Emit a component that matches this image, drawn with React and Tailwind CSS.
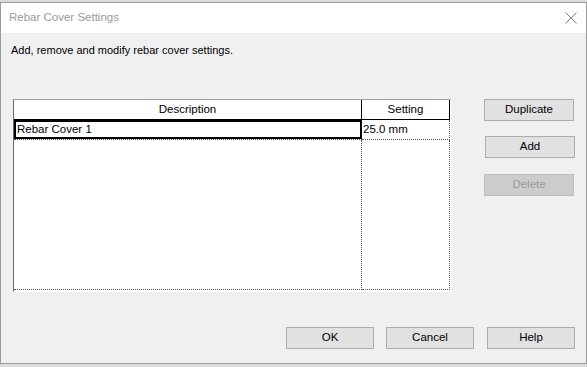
export default function App() {
  const font = "font-['Liberation_Sans',Arial,sans-serif]";
  const btn =
    "h-[22px] w-[88px] border border-[#adadad] bg-[#e1e1e1] flex items-center justify-center text-[11.5px] text-black";
  return (
    <div className={`w-[587px] h-[367px] bg-[#dcdcdc] pt-[2px] ${font}`}>
      <div className="w-[587px] h-[362px] border border-[#9b9b9b] bg-[#f0f0f0] flex flex-col">
        {/* Title bar */}
        <div className="h-[30px] bg-white flex items-center justify-between pl-[8px] pr-[8px]">
          <span className="text-[11.5px] text-[#9a9a9a] leading-none">Rebar Cover Settings</span>
          <svg width="12" height="12" viewBox="0 0 12 12" className="mr-[1px]">
            <path d="M0.5 0.5 L11.5 11.5 M11.5 0.5 L0.5 11.5" stroke="#7a7a7a" strokeWidth="1" fill="none" />
          </svg>
        </div>
        {/* Body */}
        <div className="flex flex-col pt-[9px]">
          <div className="pl-[10px] h-[16px] leading-[16px] text-[11px] text-black">
            Add, remove and modify rebar cover settings.
          </div>
          <div className="flex mt-[41px] pl-[12px]">
            {/* Table */}
            <div className="w-[438px] h-[193px] border-t border-l border-t-[#a0a0a0] border-l-[#6b6b6b] border-r border-b border-r-white border-b-white bg-white flex flex-col text-[11.5px] text-black">
              <div className="flex h-[20px] border-b border-black">
                <div className="w-[348px] border-r border-black flex items-center justify-center leading-none">
                  Description
                </div>
                <div className="w-[88px] border-r border-black flex items-center justify-center leading-none">
                  Setting
                </div>
              </div>
              <div className="flex h-[20px]">
                <div className="w-[348px] border-b border-dotted border-[#555] flex">
                  <div className="w-[348px] h-[19px] border-2 border-black flex items-center pl-[1px] leading-none">
                    Rebar Cover 1
                  </div>
                </div>
                <div className="w-[88px] border-r border-b border-dotted border-[#555] flex items-center pl-[1px] leading-none">
                  25.0 mm
                </div>
              </div>
              <div className="flex h-[150px]">
                <div className="w-[348px] border-r border-b border-dotted border-[#555]" />
                <div className="w-[88px] border-r border-b border-dotted border-[#555]" />
              </div>
            </div>
            {/* Side buttons */}
            <div className="ml-[33px] flex flex-col">
              <div className={`${btn} w-[90px]`}>Duplicate</div>
              <div className={`${btn} w-[90px] ml-[1px] mt-[15px]`}>Add</div>
              <div className="h-[22px] w-[90px] mt-[16px] border border-[#bfbfbf] bg-[#cccccc] flex items-center justify-center text-[11.5px] text-[#9a9a9a]">
                Delete
              </div>
            </div>
          </div>
          <div className="flex justify-end pr-[11px] mt-[35px]">
            <div className={btn}>OK</div>
            <div className={`${btn} ml-[12px]`}>Cancel</div>
            <div className={`${btn} ml-[13px]`}>Help</div>
          </div>
        </div>
      </div>
    </div>
  );
}
